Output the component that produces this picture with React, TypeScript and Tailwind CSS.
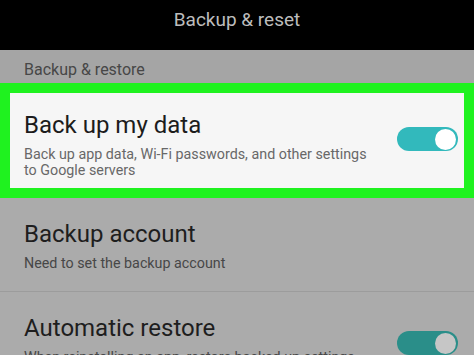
import React from 'react';

function Toggle({ dim = false }: { dim?: boolean }) {
  return (
    <div
      className={`flex h-[24px] w-[61px] shrink-0 items-center justify-end rounded-full pr-[2px] ${
        dim ? 'bg-[#2a8e89]' : 'bg-[#32b9bc]'
      }`}
    >
      <div className={`h-[21px] w-[21px] rounded-full ${dim ? 'bg-[#c6c6c6]' : 'bg-white'}`} />
    </div>
  );
}

export default function App() {
  return (
    <div className="h-[355px] w-[474px] overflow-hidden bg-[#ababab] font-['Roboto',sans-serif]">
      <div className="flex h-[50px] items-center justify-center bg-black pb-[10px] text-[19px] text-[#bdbdbd]">
        Backup &amp; reset
      </div>

      <div className="flex h-[33px] items-center bg-[#a5a5a5] pl-[24px] pt-[7px] text-[16px] text-[#474747]">
        Backup &amp; restore
      </div>

      <div className="border-[10px] border-[#1ff21f] bg-[#f6f6f6]">
        <div className="flex h-[95px] items-start pl-[14px] pr-[6px] pt-[18px]">
          <div className="flex-1">
            <div className="text-[24px] leading-[28px] text-[#1c1c1c]">Back up my data</div>
            <div className="mt-[7px] text-[14.3px] leading-[16px] text-[#686868]">
              Back up app data, Wi-Fi passwords, and other settings
              <br />
              to Google servers
            </div>
          </div>
          <div className="mt-[16px]">
            <Toggle />
          </div>
        </div>
      </div>

      <div className="h-[94px] border-b border-[#9c9c9c] pl-[24px] pt-[22px]">
        <div className="text-[24px] leading-[28px] text-[#1e1e1e]">Backup account</div>
        <div className="mt-[7px] text-[14.3px] leading-[16px] text-[#474747]">Need to set the backup account</div>
      </div>

      <div className="flex pl-[24px] pr-[16px] pt-[22px]">
        <div className="flex-1">
          <div className="text-[24px] leading-[28px] text-[#1e1e1e]">Automatic restore</div>
          <div className="mt-[7px] text-[14.3px] leading-[16px] text-[#474747]">
            When reinstalling an app, restore backed up settings
          </div>
        </div>
        <div className="mt-[17px]">
          <Toggle dim />
        </div>
      </div>
    </div>
  );
}
